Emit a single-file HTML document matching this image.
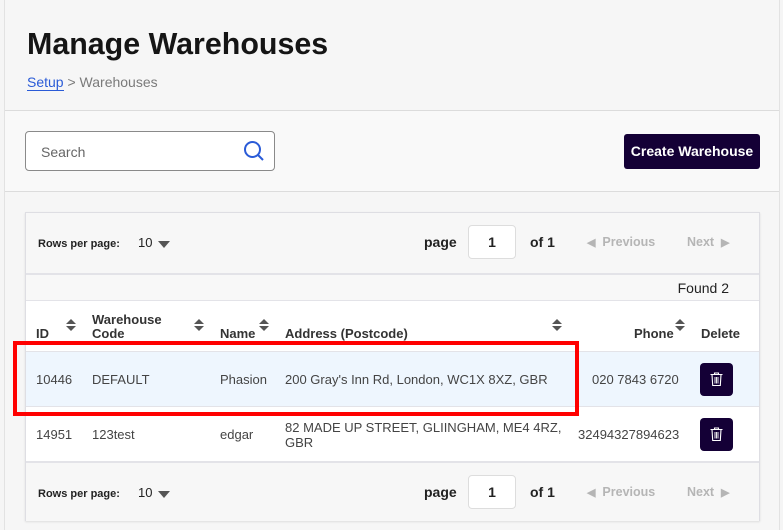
<!DOCTYPE html>
<html><head><meta charset="utf-8"><style>
*{box-sizing:border-box;margin:0;padding:0}
body{width:783px;height:530px;overflow:hidden;background:#f5f5f5;font-family:"Liberation Sans",sans-serif;position:relative;color:#222}
.a{position:absolute}
.main{left:4px;top:0;width:776px;height:530px;border-left:1px solid #e2e2e2;border-right:1px solid #e2e2e2;background:#f6f6f6}
h1{position:absolute;left:27px;top:27px;font-size:30.4px;font-weight:bold;color:#151515}
.bc{left:27px;top:74px;font-size:14px;color:#7a7a7a}
.bc span{color:#2a5bd7;border-bottom:1px solid #2a5bd7}
.hr{left:5px;width:774px;height:1px;background:#dcdcdc}
.tool{left:5px;top:111px;width:774px;height:80px;background:#f9f9f9}
.search{left:25px;top:131px;width:250px;height:40px;border:1px solid #8a8a8a;border-radius:4px;background:#fff;font-size:14px;color:#666;padding:12px 15px}
.btn{left:624px;top:134px;width:136px;height:35px;background:#140036;border-radius:3px;color:#fff;font-weight:bold;font-size:14px;text-align:center;line-height:35px}
.card{left:25px;top:212px;width:735px;height:309px;border:1px solid #dedee3;background:#fff;box-shadow:0 1px 2px rgba(0,0,0,.1)}
.pager{left:0;width:733px;height:60px;background:#f7f7f7;font-size:11px}
.pager .r{position:absolute;left:12px;top:22px;font-weight:bold;color:#222}
.pager .r b{font-weight:normal;margin-left:15px;font-size:13px}
.tri{display:inline-block;width:0;height:0;border-left:6px solid transparent;border-right:6px solid transparent;border-top:7px solid #555;margin-left:6px;vertical-align:middle}
.pg{position:absolute;left:398px;top:21px;font-size:14px;font-weight:bold}
.inp{position:absolute;left:442px;top:12px;width:48px;height:34px;border:1px solid #ddd;border-radius:4px;background:#fff;text-align:center;line-height:32px;font-size:14px;font-weight:bold}
.of{position:absolute;left:504px;top:21px;font-size:14px;font-weight:bold}
.prev{position:absolute;left:561px;top:22px;font-size:12.5px;font-weight:bold;color:#b5b5b5}
.next{position:absolute;left:661px;top:22px;font-size:12.5px;font-weight:bold;color:#b5b5b5}
.prev i,.next i{font-style:normal;font-size:11px;vertical-align:0}
.found{left:0;top:60px;width:733px;height:28px;border-top:2px solid #e3e3e8;border-bottom:1px solid #e3e3e8;background:#f8f8f8;font-size:14px;text-align:right;padding:5px 30px 0 0}
.th{font-size:13px;font-weight:bold;color:#333;line-height:14px}
.s{position:absolute;width:10px;height:14px}
.s:before{content:"";position:absolute;left:0;top:0;border-left:5px solid transparent;border-right:5px solid transparent;border-bottom:5px solid #555}
.s:after{content:"";position:absolute;left:0;top:7px;border-left:5px solid transparent;border-right:5px solid transparent;border-top:5px solid #555}
.row{left:0;width:733px;height:55px;border-top:1px solid #e3e3e8;font-size:13px;color:#444}
.row div{position:absolute}
.del{width:33px;height:33px;background:#140036;border-radius:4px}
</style></head><body>
<div class="a main"></div>
<h1>Manage Warehouses</h1>
<div class="a bc"><span>Setup</span> &gt; Warehouses</div>
<div class="a tool"></div>
<div class="a hr" style="top:110px"></div>
<div class="a hr" style="top:191px"></div>
<div class="a search">Search
<svg class="a" style="left:217px;top:8px" width="22" height="22" viewBox="0 0 22 22"><circle cx="9.5" cy="9.5" r="7.5" fill="none" stroke="#2a5bd7" stroke-width="2"/><path d="M15 15l5 5" stroke="#2a5bd7" stroke-width="2"/></svg></div>
<div class="a btn">Create Warehouse</div>
<div class="a card">
 <div class="a pager" style="top:0">
  <div class="r">Rows per page: <b>10</b><span class="tri"></span></div>
  <div class="pg">page</div><div class="inp">1</div><div class="of">of 1</div>
  <div class="prev"><i>◀</i>&nbsp; Previous</div><div class="next">Next &nbsp;<i>▶</i></div>
 </div>
 <div class="a found">Found 2</div>
 <div class="a th" style="left:10px;top:114px">ID</div><div class="s" style="left:40px;top:106px"></div>
 <div class="a th" style="left:66px;top:100px">Warehouse<br>Code</div><div class="s" style="left:168px;top:106px"></div>
 <div class="a th" style="left:194px;top:114px">Name</div><div class="s" style="left:233px;top:106px"></div>
 <div class="a th" style="left:259px;top:114px">Address (Postcode)</div><div class="s" style="left:526px;top:106px"></div>
 <div class="a th" style="left:608px;top:114px">Phone</div><div class="s" style="left:649px;top:106px"></div>
 <div class="a th" style="left:675px;top:114px">Delete</div>
 <div class="a row" style="top:138px;background:#eef6fe">
  <div style="left:10px;top:20px">10446</div><div style="left:66px;top:20px">DEFAULT</div><div style="left:194px;top:20px">Phasion</div>
  <div style="left:259px;top:20px">200 Gray's Inn Rd, London, WC1X 8XZ, GBR</div>
  <div style="left:566px;top:20px">020 7843 6720</div>
  <div class="del" style="left:674px;top:11px"><svg width="33" height="33"><path d="M10.5 11.5h12M14.5 11.5v-1.5h4v1.5M12 11.5l.7 11h7.6l.7-11" fill="none" stroke="#fff" stroke-width="1.1"/><path d="M15 14v6.5M16.5 14v6.5M18 14v6.5" stroke="#fff" stroke-width="0.9"/></svg></div>
 </div>
 <div class="a row" style="top:193px;height:56px">
  <div style="left:10px;top:20px">14951</div><div style="left:66px;top:20px">123test</div><div style="left:194px;top:20px">edgar</div>
  <div style="left:259px;top:13px;line-height:15px">82 MADE UP STREET, GLIINGHAM, ME4 4RZ,<br>GBR</div>
  <div style="left:552px;top:20px">32494327894623</div>
  <div class="del" style="left:674px;top:11px"><svg width="33" height="33"><path d="M10.5 11.5h12M14.5 11.5v-1.5h4v1.5M12 11.5l.7 11h7.6l.7-11" fill="none" stroke="#fff" stroke-width="1.1"/><path d="M15 14v6.5M16.5 14v6.5M18 14v6.5" stroke="#fff" stroke-width="0.9"/></svg></div>
 </div>
 <div class="a pager" style="top:248px;border-top:2px solid #e3e3e8">
  <div class="r">Rows per page: <b>10</b><span class="tri"></span></div>
  <div class="pg">page</div><div class="inp">1</div><div class="of">of 1</div>
  <div class="prev"><i>◀</i>&nbsp; Previous</div><div class="next">Next &nbsp;<i>▶</i></div>
 </div>
</div>
<div class="a" style="left:13px;top:341px;width:566px;height:75px;border:4px solid #f00"></div>
</body></html>
